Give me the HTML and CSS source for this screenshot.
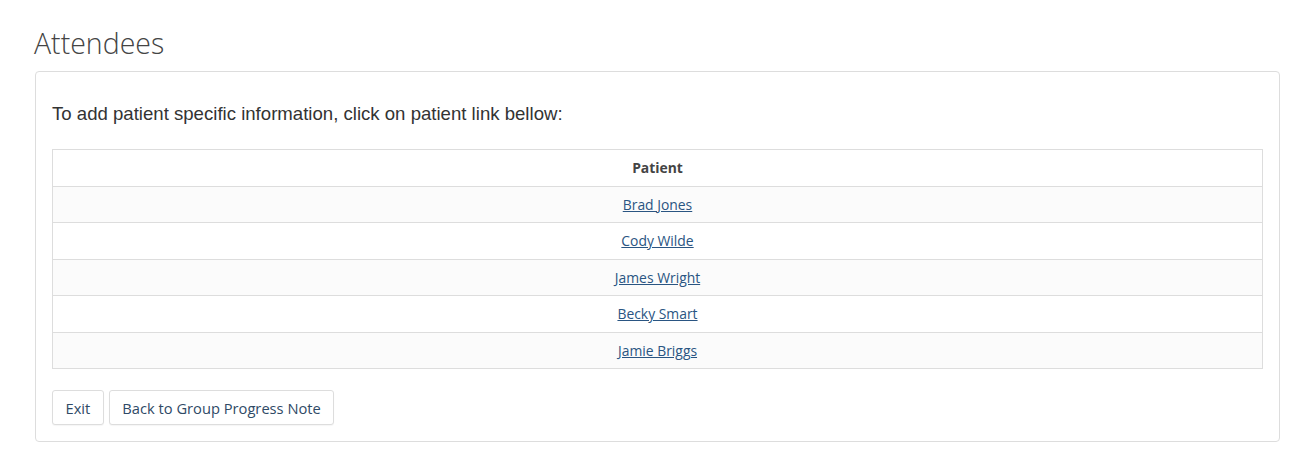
FILE: index.html
```html
<!DOCTYPE html>
<html>
<head>
<meta charset="utf-8">
<link rel="stylesheet" href="styles.css">
</head>
<body>
<div class="page">
  <h2 class="title">Attendees</h2>
  <div class="panel">
    <p class="intro">To add patient specific information, click on patient link bellow:</p>
    <table class="grid">
      <thead><tr><th>Patient</th></tr></thead>
      <tbody>
        <tr><td><a href="#">Brad Jones</a></td></tr>
        <tr><td><a href="#">Cody Wilde</a></td></tr>
        <tr><td><a href="#">James Wright</a></td></tr>
        <tr><td><a href="#">Becky Smart</a></td></tr>
        <tr><td><a href="#">Jamie Briggs</a></td></tr>
      </tbody>
    </table>
    <div class="actions">
      <button class="btn">Exit</button>
      <button class="btn">Back to Group Progress Note</button>
    </div>
  </div>
</div>
</body>
</html>
```
FILE: styles.css
```css
html, body { margin: 0; padding: 0; background: #fff; }
body { font-family: "Open Sans", sans-serif; color: #333; }
.page { padding: 24px 34px 0 35px; }
.title {
  margin: 0 0 8px -1px;
  font-weight: 300;
  font-size: 28.5px;
  line-height: 39px;
  color: #444;
}
.panel {
  border: 1px solid #ddd;
  border-radius: 4px;
  padding: 24px 16px 16px 16px;
}
.intro {
  margin: 0 0 17px 0;
  font-family: "Liberation Sans", Arial, sans-serif;
  font-size: 18.6px;
  line-height: 36px;
  color: #333;
}
.grid {
  width: 100%;
  border-collapse: collapse;
  border: 1px solid #ddd;
  font-size: 13.9px;
}
.grid th, .grid td {
  border-top: 1px solid #ddd;
  text-align: center;
  padding: 8px;
  line-height: 19.5px;
}
.grid th { font-weight: 700; color: #444; }
.grid tbody tr:nth-child(odd) { background: #fbfbfb; }
.grid a { color: #2a5582; text-decoration: underline; }
.actions { display: flex; gap: 5px; margin-top: 21px; }
.btn {
  font-family: "Open Sans", sans-serif;
  font-size: 14.7px;
  color: #2f4a66;
  background: #fff;
  border: 1px solid #ddd;
  border-radius: 3px;
  height: 35px;
  padding: 0 12.5px;
  box-shadow: 0 1px 1px rgba(0,0,0,0.04);
}
```
